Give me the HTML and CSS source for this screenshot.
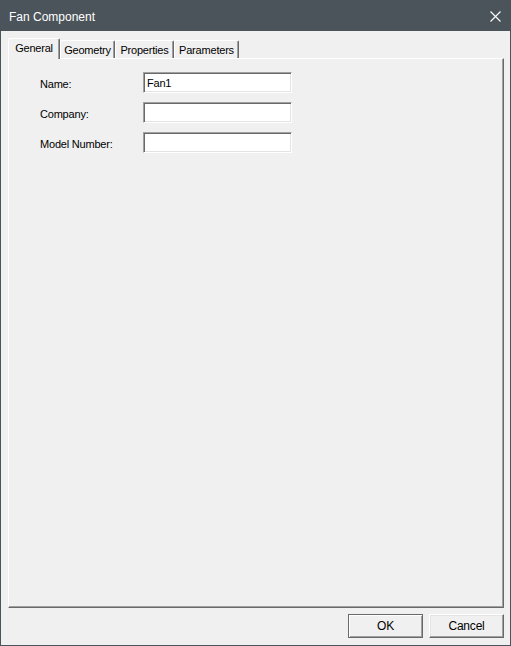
FILE: index.html
```html
<!DOCTYPE html>
<html lang="en">
<head>
    <meta charset="UTF-8">
    <meta name="viewport" content="width=device-width, initial-scale=1.0">
    <title>Fan Component</title>
    <link rel="stylesheet" href="styles.css">
</head>
<body>
    <div class="window">
        <div class="title-bar">
            <span class="title">Fan Component</span>
            <svg class="close" width="11" height="11" viewBox="0 0 11 11">
                <path d="M0.5 0.5 L10.5 10.5 M10.5 0.5 L0.5 10.5" stroke="#fff" stroke-width="1.1" fill="none"/>
            </svg>
        </div>

        <div class="content">
            <div class="tabs">
                <div class="tab active">General</div>
                <div class="tab tab-geometry">Geometry</div>
                <div class="tab tab-properties">Properties</div>
                <div class="tab tab-parameters">Parameters</div>
            </div>

            <div class="panel">
                <div class="form">
                    <label>Name:</label>
                    <div class="field">Fan1</div>
                    <label>Company:</label>
                    <div class="field"></div>
                    <label>Model Number:</label>
                    <div class="field"></div>
                </div>
            </div>

            <div class="buttons">
                <button class="button default">OK</button>
                <button class="button">Cancel</button>
            </div>
        </div>
    </div>
</body>
</html>
```

FILE: styles.css
```css
body {
    margin: 0;
    background-color: #f0f0f0;
    font-family: "Liberation Sans", Arial, sans-serif;
    font-size: 11px;
    letter-spacing: -0.2px;
    color: #000;
}
.window {
    width: 511px;
    height: 646px;
    box-sizing: border-box;
    border: 1px solid #4b545a;
    display: flex;
    flex-direction: column;
    background-color: #f0f0f0;
}
.title-bar {
    height: 30px;
    flex: none;
    background-color: #4b545a;
    display: flex;
    align-items: center;
    justify-content: space-between;
    padding: 0 9px 0 8px;
}
.title {
    color: #fff;
    font-size: 12px;
    letter-spacing: 0;
    margin-top: 1px;
}
.close {
    display: block;
    margin-top: 1px;
}
.content {
    flex: 1;
    display: flex;
    flex-direction: column;
    padding: 7px 6px 7px 7px;
}
.tabs {
    height: 20px;
    display: flex;
    align-items: flex-end;
    flex: none;
}
.tab {
    box-sizing: border-box;
    height: 18px;
    border-top: 1px solid #fff;
    border-left: 1px solid #fff;
    border-right: 1px solid #696969;
    box-shadow: inset -1px 0 #a0a0a0;
    border-top-left-radius: 2px;
    border-top-right-radius: 2px;
    text-align: center;
    line-height: 16px;
    padding-top: 1px;
    background-color: #f0f0f0;
}
.tab.active {
    width: 52px;
    height: 21px;
    margin-bottom: -1px;
    position: relative;
    z-index: 1;
    padding-top: 2px;
    line-height: 14px;
}
.tab-geometry {
    width: 55px;
}
.tab-properties {
    width: 59px;
}
.tab-parameters {
    width: 65px;
}
.panel {
    flex: none;
    height: 550px;
    box-sizing: border-box;
    border-top: 1px solid #fff;
    border-left: 1px solid #fff;
    border-right: 1px solid #696969;
    border-bottom: 1px solid #696969;
    box-shadow: inset -1px -1px #a0a0a0;
    padding: 13px 0 0 31px;
}
.form {
    display: grid;
    grid-template-columns: 103px 149px;
    grid-auto-rows: 21px;
    row-gap: 9px;
}
.form label {
    align-self: center;
    margin-top: 3px;
}
.field {
    box-sizing: border-box;
    background-color: #fff;
    border-top: 1px solid #a0a0a0;
    border-left: 1px solid #a0a0a0;
    border-right: 1px solid #fff;
    border-bottom: 1px solid #fff;
    box-shadow: inset 1px 1px #696969, inset -1px -1px #e3e3e3;
    padding: 3px 0 0 3px;
    line-height: 14px;
}
.buttons {
    display: flex;
    justify-content: flex-end;
    gap: 6px;
    margin-top: 6px;
}
.button {
    width: 75px;
    height: 24px;
    box-sizing: border-box;
    background-color: #f0f0f0;
    font-family: "Liberation Sans", Arial, sans-serif;
    font-size: 12px;
    letter-spacing: -0.2px;
    color: #000;
    border: 1px solid;
    border-color: #fff #696969 #696969 #fff;
    box-shadow: inset -1px -1px #a0a0a0, inset 1px 1px #e3e3e3;
    padding: 0;
}
.button.default {
    border-color: #696969;
    box-shadow: inset 1px 1px #fff, inset -1px -1px #a0a0a0;
}
```
